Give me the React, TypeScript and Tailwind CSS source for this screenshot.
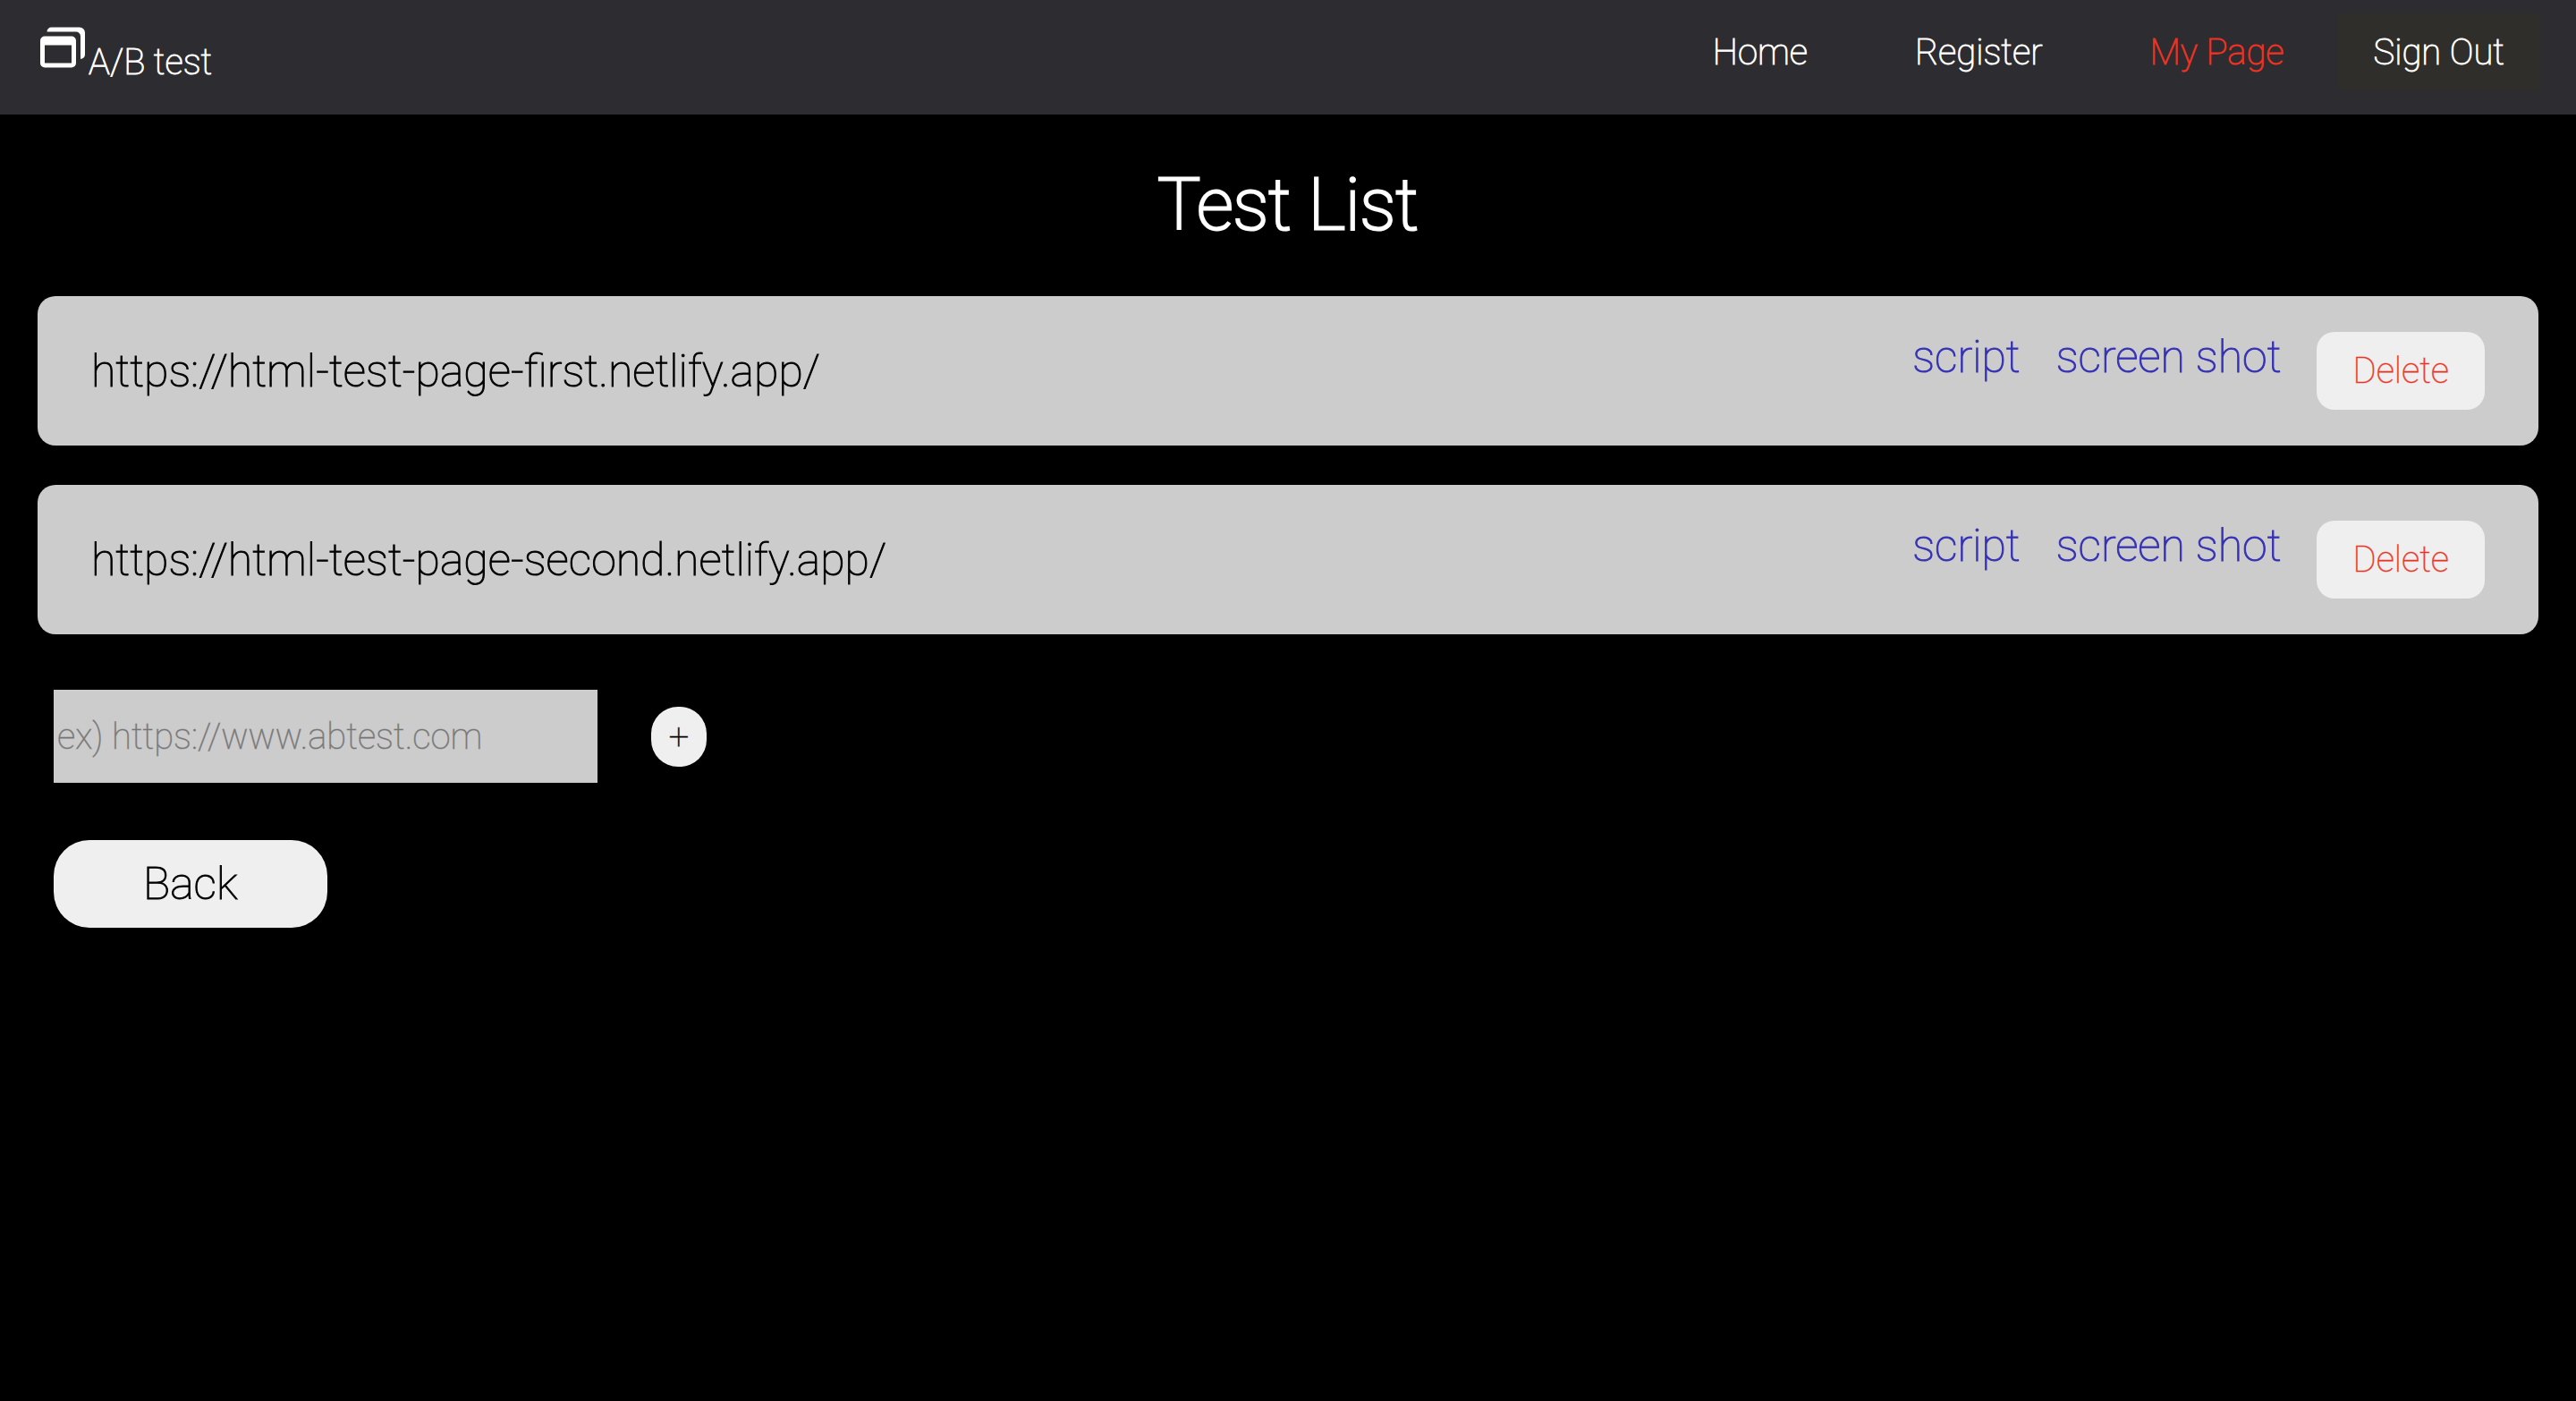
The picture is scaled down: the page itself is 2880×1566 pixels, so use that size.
const tests = [
  { url: "https://html-test-page-first.netlify.app/" },
  { url: "https://html-test-page-second.netlify.app/" },
];

function StackedWindows() {
  return (
    <svg viewBox="0 0 50 46" className="h-[46px] w-[50px]" fill="currentColor" stroke="none" aria-hidden="true">
      <path d="M7.500 5.500a5 5 0 0 1 5-5H44a6 6 0 0 1 6 6V31a5 5 0 0 1-5 5V10.500a5 5 0 0 0-5-5Z" />
      <path
        fillRule="evenodd"
        d="M5 10.500H35a5 5 0 0 1 5 5V40.500a5 5 0 0 1-5 5H5a5 5 0 0 1-5-5V15.500a5 5 0 0 1 5-5ZM5 20.500V40.500H35V20.500Z"
      />
    </svg>
  );
}

export default function App() {
  return (
    <div className="min-h-screen bg-black font-['Roboto',sans-serif] font-thin text-white [-webkit-text-stroke:1px_currentColor]">
      <header className="flex h-32 items-start justify-between bg-[#2d2c31] px-10 text-[40px] leading-[50px]">
        <a href="#home" className="flex items-start gap-1 pt-[30px] pl-[5px] [-webkit-text-stroke:1px_currentColor]">
          <StackedWindows />
          <span className="pt-[15px]">A/B test</span>
        </a>
        <nav className="flex items-start pt-[15px]">
          <a href="#home" className="px-[60px] pt-[19px] pb-[17px] [-webkit-text-stroke:1px_currentColor]">Home</a>
          <a href="#register" className="px-[60px] pt-[19px] pb-[17px] [-webkit-text-stroke:1px_currentColor]">Register</a>
          <a href="#mypage" className="px-[60px] pt-[19px] pb-[17px] text-[#ea3323] [-webkit-text-stroke:1px_currentColor]">My Page</a>
          <button type="button" className="bg-[#2f2e2b] px-10 pt-[19px] pb-[17px] [-webkit-text-stroke:1px_currentColor]">Sign Out</button>
        </nav>
      </header>
      <main>
        <h1 className="pt-[51px] text-center text-[80px] leading-[100px] [-webkit-text-stroke:3px_currentColor]">Test List</h1>
        <ul className="mt-[52px] flex flex-col gap-11 px-[42px]">
          {tests.map((t) => (
            <li key={t.url} className="flex items-start justify-between rounded-[20px] bg-[#cccccc] px-[60px] py-10 text-black">
              <span className="self-center text-[50px] leading-[60px] [-webkit-text-stroke:1px_currentColor]">{t.url}</span>
              <div className="flex items-start gap-10 text-[50px] leading-[57px] text-[#3632b4]">
                <a href="#script" className="[-webkit-text-stroke:1px_currentColor]">script</a>
                <a href="#screenshot" className="[-webkit-text-stroke:1px_currentColor]">screen shot</a>
                <button type="button" className="rounded-[20px] bg-[#efefef] px-10 py-5 text-[40px] leading-[47px] text-[#ea3323] [-webkit-text-stroke:1px_#ea332380]">
                  Delete
                </button>
              </div>
            </li>
          ))}
        </ul>
        <form className="mt-[62px] flex items-center gap-[60px] px-[60px]" onSubmit={(e) => e.preventDefault()}>
          <input
            type="text"
            aria-label="Page URL"
            placeholder="ex) https://www.abtest.com"
            className="h-[104px] w-[608px] bg-[#cccccc] px-1 text-[40px] text-black placeholder:text-[#757575] [-webkit-text-stroke:1px_#75757580]"
          />
          <button type="submit" className="h-[67px] w-[62px] rounded-[30px] bg-[#efefef] text-[40px] leading-[47px] text-black [-webkit-text-stroke:1px_#00000080]">
            +
          </button>
        </form>
        <div className="mt-16 px-[60px]">
          <button type="button" className="rounded-[40px] bg-[#efefef] px-[100px] py-5 text-[50px] leading-[58px] text-black [-webkit-text-stroke:1px_currentColor]">
            Back
          </button>
        </div>
      </main>
    </div>
  );
}
